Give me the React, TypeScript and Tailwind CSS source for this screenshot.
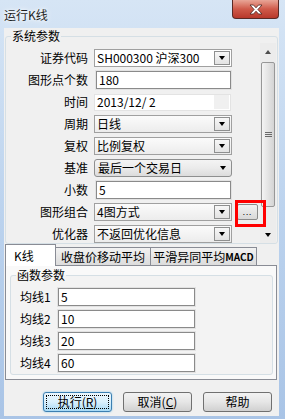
import React from 'react';

function Arrow() {
  return <span className="h-0 w-0 border-x-[3.5px] border-t-[4px] border-x-transparent border-t-black" />;
}

function DropBtn() {
  return (
    <span className="mr-[1px] flex h-[14px] w-[16px] items-center justify-center border border-[#8e8f8f] bg-gradient-to-b from-[#f7f7f7] to-[#e3e3e3]">
      <Arrow />
    </span>
  );
}

function Combo({ value, white }: { value: string; white?: boolean }) {
  return (
    <div
      className={`flex h-[18px] w-[138px] items-center border border-[#a0a0a0] ${
        white ? 'bg-white' : 'bg-gradient-to-b from-[#fbfbfb] to-[#ececec]'
      }`}
    >
      <span className="flex-1 whitespace-nowrap pl-[2px] leading-none">{value}</span>
      <DropBtn />
    </div>
  );
}

function Input({ value, w }: { value: string; w: string }) {
  return (
    <div className={`flex h-[18px] items-center border border-[#8a8a8a] bg-white outline outline-1 outline-[#e2e2e2] ${w}`}>
      <span className="pl-[2px] leading-none">{value}</span>
    </div>
  );
}

function Row({ label, children }: { label: string; children: React.ReactNode }) {
  return (
    <div className="flex h-[22px] items-center">
      <span className="w-[82px] whitespace-nowrap text-right leading-none">{label}</span>
      <div className="ml-[6px] flex items-center">{children}</div>
    </div>
  );
}

function Scrollbar() {
  return (
    <div className="flex h-full w-[16px] flex-col bg-[#ececec]">
      <div className="flex h-[17px] items-center justify-center">
        <span className="h-0 w-0 border-x-[3.5px] border-b-[4px] border-x-transparent border-b-[#4d4d4d]" />
      </div>
      <div className="mx-[1px] mt-[2px] flex h-[145px] items-center justify-center rounded-[2px] border border-[#979797] bg-gradient-to-r from-[#f4f4f4] to-[#d4d4d4]">
        <div className="flex w-[7px] flex-col gap-[1px]">
          <span className="h-[1px] bg-[#6a6a6a]" />
          <span className="h-[1px] bg-[#6a6a6a]" />
          <span className="h-[1px] bg-[#6a6a6a]" />
        </div>
      </div>
      <div className="flex-1" />
      <div className="flex h-[16px] items-center justify-center">
        <Arrow />
      </div>
    </div>
  );
}

export default function App() {
  return (
    <div className="flex h-[419px] w-[285px] flex-col bg-gradient-to-b from-[#d6e5f5] via-[#bcd3ee] to-[#a9c4e6] font-['Noto_Sans_CJK_SC',sans-serif] text-[12px] text-black">
      <div className="relative h-[28px] shrink-0">
        <span className="absolute left-[4px] top-[9px] leading-none text-[#1e1e1e] [text-shadow:0_0_6px_#ffffff,0_0_3px_#ffffff]">运行K线</span>
        <div className="absolute left-[232px] top-0 flex h-[19px] w-[47px] items-center justify-center rounded-b-[4px] border border-t-0 border-[#5a2a25] bg-gradient-to-b from-[#e8a597] via-[#cf5a4a] to-[#b8382b]">
          <svg width="14" height="11" viewBox="0 0 14 11">
            <path
              d="M1 1 H4.5 L7 3.8 L9.5 1 H13 L8.9 5.5 L13 10 H9.5 L7 7.2 L4.5 10 H1 L5.1 5.5 Z"
              fill="#fff"
              stroke="#4a2420"
              strokeWidth="0.8"
            />
          </svg>
        </div>
      </div>

      <div className="mb-[3px] ml-[4px] flex w-[275px] flex-1 flex-col bg-[#f0f0f0] pt-[1px]">
        <fieldset className="ml-[1px] w-[273px] rounded-[3px] border border-[#d5dfe5]">
          <legend className="ml-[5px] px-[1px] leading-[14px]">系统参数</legend>
          <div className="flex h-[200px]">
            <div className="relative flex-1 pt-[4px]">
              <Row label="证券代码">
                <Combo value="SH000300 沪深300" white />
              </Row>
              <Row label="图形点个数">
                <div className="ml-[2px]">
                  <Input value="180" w="w-[135px]" />
                </div>
              </Row>
              <Row label="时间">
                <div className="flex h-[17px] w-[137px] items-center border border-[#e3e3e3] bg-white">
                  <span className="flex-1 pl-[2px] leading-none">2013/12/ 2</span>
                  <span className="mr-[1px] h-[14px] w-[15px] bg-[#f0f0f0]" />
                </div>
              </Row>
              <Row label="周期">
                <Combo value="日线" />
              </Row>
              <Row label="复权">
                <Combo value="比例复权" />
              </Row>
              <Row label="基准">
                <div className="flex h-[18px] w-[138px] items-center rounded-[3px] border border-[#8e8f8f] bg-gradient-to-b from-[#f4f4f4] via-[#ebebeb] to-[#dcdcdc]">
                  <span className="flex-1 pl-[3px] leading-none">最后一个交易日</span>
                  <span className="mr-[5px] flex">
                    <Arrow />
                  </span>
                </div>
              </Row>
              <Row label="小数">
                <div className="ml-[2px]">
                  <Input value="5" w="w-[135px]" />
                </div>
              </Row>
              <Row label="图形组合">
                <Combo value="4图方式" />
                <div className="relative ml-[5px]">
                  <div className="flex h-[16px] w-[21px] items-end justify-center rounded-[2px] border border-[#8a8a8a] bg-gradient-to-b from-[#f2f2f2] to-[#d8d8d8] pb-[3px] text-[8px] leading-none tracking-[1px]">
                    ...
                  </div>
                  <div className="absolute -left-[2px] -top-[4px] h-[27px] w-[31px] border-[3px] border-[#ff0000]" />
                </div>
              </Row>
              <Row label="优化器">
                <Combo value="不返回优化信息" />
              </Row>
            </div>
            <div className="mr-[1px]">
              <Scrollbar />
            </div>
          </div>
        </fieldset>

        <div className="relative z-10 -mb-[1px] ml-[1px] flex h-[22px] items-end">
          <div className="flex h-[22px] w-[51px] items-center border border-b-0 border-[#898c95] bg-white pl-[8px] leading-none">
            K线
          </div>
          <div className="flex h-[19px] w-[95px] items-center justify-center border border-l-0 border-[#898c95] bg-gradient-to-b from-[#f2f2f2] to-[#dcdcdc] leading-none">
            收盘价移动平均
          </div>
          <div className="flex h-[19px] w-[106px] items-center justify-center border border-l-0 border-[#898c95] bg-gradient-to-b from-[#f2f2f2] to-[#dcdcdc] leading-none">
            平滑异同平均<span className="text-[10px] font-bold">MACD</span>
          </div>
        </div>

        <div className="ml-[1px] h-[115px] w-[272px] border border-[#898c95] bg-[#f9f9f9] pl-[4px] pr-[3px] pt-[2px]">
          <fieldset className="rounded-[3px] border border-[#d5dfe5] bg-[#f3f3f3]">
            <legend className="ml-[5px] px-[1px] leading-[14px]">函数参数</legend>
            <div className="pt-[4px]">
              {['5', '10', '20', '60'].map((v, i) => (
                <div key={i} className="flex h-[22px] items-center">
                  <span className="ml-[9px] w-[38px] leading-none">均线{i + 1}</span>
                  <Input value={v} w="w-[137px]" />
                </div>
              ))}
            </div>
          </fieldset>
        </div>

        <div className="mt-[12px] flex h-[20px] justify-end gap-[11px] pr-[7px]">
          <button className="flex w-[69px] items-center justify-center rounded-[3px] border border-[#3c7fb1] bg-gradient-to-b from-[#eaf6fd] via-[#d9f0fc] to-[#a7d9f5] p-[2px] shadow-[0_0_2px_#7fc4ea]">
            <span className="flex h-full w-full items-center justify-center border border-dotted border-black leading-none">
              执行(<u>R</u>)
            </span>
          </button>
          <button className="flex w-[69px] items-center justify-center rounded-[3px] border border-[#707070] bg-gradient-to-b from-[#f2f2f2] via-[#e6e6e6] to-[#d0d0d0] leading-none">
            取消(<u>C</u>)
          </button>
          <button className="flex w-[69px] items-center justify-center rounded-[3px] border border-[#707070] bg-gradient-to-b from-[#f2f2f2] via-[#e6e6e6] to-[#d0d0d0] leading-none">
            帮助
          </button>
        </div>
      </div>
    </div>
  );
}
